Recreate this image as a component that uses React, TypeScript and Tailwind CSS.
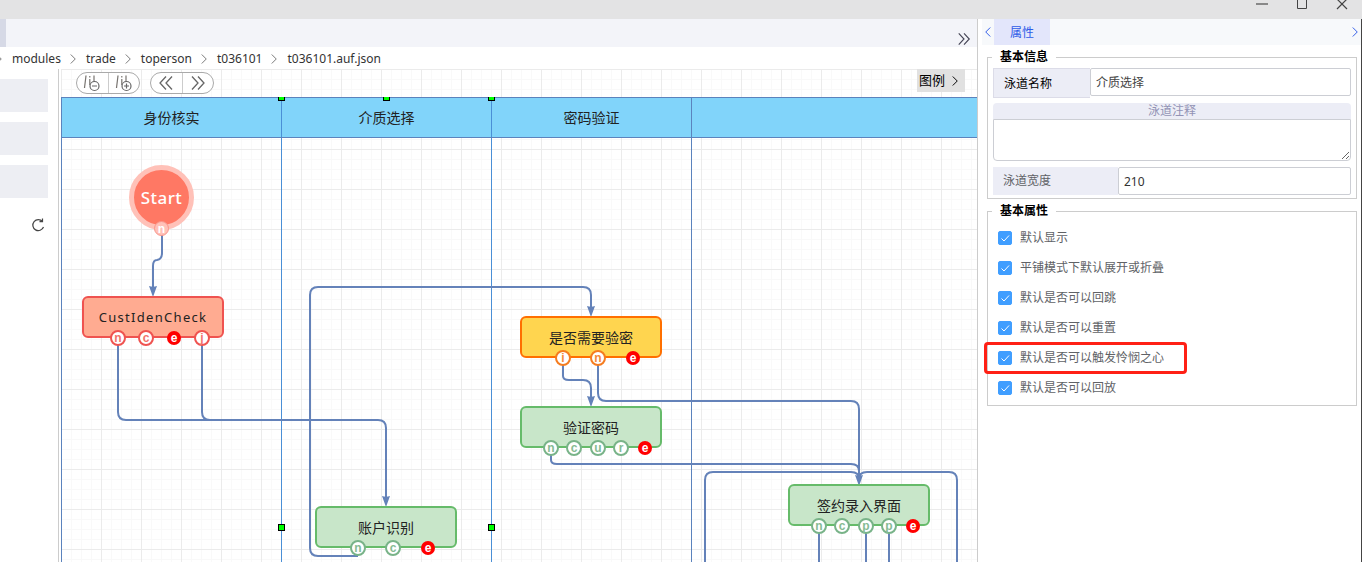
import React, { useState } from "react";

type Tone = "red" | "amber" | "green";
type Port = { x: number; label: string };
type FlowNode = { x: number; y: number; title: string; tone: Tone; ports: Port[] };

const box: Record<Tone, string> = {
  red: "border-[#ef5350] bg-[#ffab91]",
  amber: "border-[#ff6f00] bg-[#ffd54f]",
  green: "border-[#66bb6a] bg-[#c8e6c9]",
};
const portTone: Record<Tone, string> = {
  red: "border-[#ef5350] text-[#f2746c]",
  amber: "border-[#f57c1f] text-[#f5893a]",
  green: "border-[#78b388] text-[#86bb94]",
};

const nodes: FlowNode[] = [
  { x: 21, y: 227, title: "CustIdenCheck", tone: "red", ports: [{ x: 36, label: "n" }, { x: 64, label: "c" }, { x: 92, label: "e" }, { x: 120, label: "j" }] },
  { x: 459, y: 247, title: "是否需要验密", tone: "amber", ports: [{ x: 43, label: "i" }, { x: 78, label: "n" }, { x: 113, label: "e" }] },
  { x: 459, y: 337, title: "验证密码", tone: "green", ports: [{ x: 31, label: "n" }, { x: 54, label: "c" }, { x: 78, label: "u" }, { x: 101, label: "r" }, { x: 125, label: "e" }] },
  { x: 254, y: 437, title: "账户识别", tone: "green", ports: [{ x: 43, label: "n" }, { x: 78, label: "c" }, { x: 113, label: "e" }] },
  { x: 727, y: 415, title: "签约录入界面", tone: "green", ports: [{ x: 31, label: "n" }, { x: 54, label: "c" }, { x: 78, label: "p" }, { x: 101, label: "p" }, { x: 125, label: "e" }] },
];

const edges = [
  "M101 164V184Q101 190 96 191Q92 191 92 197V222",
  "M57 276V343Q57 351 65 351H317Q325 351 325 359V432",
  "M141 276V343Q141 351 149 351",
  "M297 487H257Q249 487 249 479V226Q249 218 257 218H522Q530 218 530 226V242",
  "M502 295V307Q502 311 508 311H522Q530 311 530 319V332",
  "M537 295V324Q537 332 545 332H790Q798 332 798 340V411",
  "M490 386V391Q490 395 496 395H790Q798 395 798 402",
  "M644 520V411Q644 403 652 403H790Q798 403 798 410Q798 403 806 403H888Q896 403 896 411V520",
  "M758 463V520",
  "M805 463V520",
  "M828 463V520",
];
const arrows = [[92, 227], [325, 437], [530, 247], [530, 337], [798, 416]];
const handles = [[220, 458], [430, 458]];

const crumbs = ["modules", "trade", "toperson", "t036101", "t036101.auf.json"];
const options = ["默认显示", "平铺模式下默认展开或折叠", "默认是否可以回跳", "默认是否可以重置", "默认是否可以触发怜悯之心", "默认是否可以回放"];

function Chevron({ left = false, double = false, className = "" }: { left?: boolean; double?: boolean; className?: string }) {
  return (
    <svg viewBox="0 0 16 16" fill="none" stroke="currentColor" strokeWidth="1.3" className={className} aria-hidden="true">
      <g transform={left ? "matrix(-1 0 0 1 16 0)" : undefined}>
        {double ? <path d="M2 1.5L8 8l-6 6.5M8 1.5L14 8l-6 6.5" /> : <path d="M5 2l6 6-6 6" />}
      </g>
    </svg>
  );
}

function LaneIcon({ plus = false }: { plus?: boolean }) {
  return (
    <svg viewBox="0 0 18 18" fill="none" className="size-[18px]" aria-hidden="true">
      <path d="M3 1.5L1.5 14" stroke="#77736f" strokeWidth="1.2" />
      <path d="M6.8 2v1.5M6.8 5v6M11 1.5v6" stroke="#77736f" strokeWidth="1.2" />
      <circle cx="11.5" cy="12" r="4.5" fill="#fff" stroke="#666" strokeWidth="1.2" />
      <path d={plus ? "M9 12h5M11.5 9.5v5" : "M9 12h5"} stroke="#666" strokeWidth="1.2" />
    </svg>
  );
}

function PortDot({ port, tone }: { port: Port; tone: Tone }) {
  const end = port.label === "e";
  return (
    <span
      style={{ left: port.x - 8, top: 34 }}
      className={`absolute flex size-4 items-center justify-center rounded-full font-['Liberation_Sans'] text-xs leading-none font-bold ${
        end ? "border border-transparent bg-[#ff0000] bg-clip-padding text-white" : `border-2 bg-white ${portTone[tone]}`
      }`}
    >
      {port.label}
    </span>
  );
}

function Canvas() {
  return (
    <main className="relative min-w-0 flex-1 overflow-hidden bg-white">
      <svg className="absolute inset-0 size-full" aria-hidden="true">
        <defs>
          <pattern id="grid" width="40" height="40" patternUnits="userSpaceOnUse">
            <path d="M10.5 0V40M20.5 0V40M30.5 0V40M0 10.5H40M0 20.5H40M0 30.5H40" stroke="#f9f9f9" />
            <path d="M.5 0V40M0 .5H40" stroke="#ebebeb" />
          </pattern>
        </defs>
        <rect width="100%" height="100%" fill="url(#grid)" />
      </svg>

      <div className="relative flex h-7 items-start pl-[15px] pr-3">
        <div className="mt-[3px] flex h-[22px] w-16 shrink-0 overflow-hidden rounded-full border border-[#aaa] bg-white">
          <button aria-label="缩小泳道" className="flex flex-1 items-center justify-center border-r border-[#ccc]"><LaneIcon /></button>
          <button aria-label="放大泳道" className="flex flex-1 items-center justify-center"><LaneIcon plus /></button>
        </div>
        <div className="ml-[10px] mt-[3px] flex h-[22px] w-16 shrink-0 overflow-hidden rounded-full border border-[#aaa] bg-white text-[#666]">
          <button aria-label="后退" className="flex flex-1 items-center justify-center border-r border-[#ccc]"><Chevron left double className="size-4" /></button>
          <button aria-label="前进" className="flex flex-1 items-center justify-center"><Chevron double className="size-4" /></button>
        </div>
        <button className="ml-auto flex h-[23px] w-12 items-center justify-between bg-[#e1e1e1] px-[2px] text-[13px] text-black">
          图例<Chevron className="mr-[2px] size-3" />
        </button>
      </div>

      <div className="relative flex h-[41px] border-y border-[#5b83bd] bg-[#81d4fa] text-sm text-[#222]">
        <div className="flex w-[221px] shrink-0 items-center justify-center border-x border-l-[#5b83bd] border-r-[#4a8fd6]">身份核实</div>
        <div className="flex w-[210px] shrink-0 items-center justify-center border-r border-[#4a8fd6]">介质选择</div>
        <div className="flex w-[200px] shrink-0 items-center justify-center border-r border-[#5b83bd]">密码验证</div>
        <span className="absolute -top-1 left-[217px] h-[7px] w-[7px] border border-black bg-[#00ff00] [clip-path:inset(3px_0_0_0)]" />
        <span className="absolute -top-1 left-[322px] h-[7px] w-[7px] border border-black bg-[#00ff00] [clip-path:inset(3px_0_0_0)]" />
        <span className="absolute -top-1 left-[427px] h-[7px] w-[7px] border border-black bg-[#00ff00] [clip-path:inset(3px_0_0_0)]" />
      </div>

      <svg className="pointer-events-none absolute inset-0 size-full" aria-hidden="true">
        <line x1=".5" x2=".5" y1="69" y2="100%" stroke="#5b83bd" />
        <line x1="220.5" x2="220.5" y1="69" y2="100%" stroke="#4a8fd6" />
        <line x1="430.5" x2="430.5" y1="69" y2="100%" stroke="#4a8fd6" />
        <line x1="630.5" x2="630.5" y1="69" y2="100%" stroke="#5b83bd" />
        {edges.map((d) => <path key={d} d={d} fill="none" stroke="#6482b9" strokeWidth="2" />)}
        {arrows.map(([x, y]) => (
          <path key={`${x}-${y}`} transform={`translate(${x} ${y})`} d="M0 1L-4 -10Q0 -8.5 4 -10Z" fill="#6482b9" />
        ))}
      </svg>

      <div className="absolute left-[68px] top-24 flex size-[65px] items-center justify-center rounded-full border-[5px] border-[#ffc1b8] bg-[#ff7864] text-[17px] font-medium tracking-wide text-white">
        Start
        <span className="absolute top-[51px] left-5 flex size-[15px] items-center justify-center rounded-full border border-[#f9958a] bg-[#ffc1b8] font-['Liberation_Sans'] text-xs font-bold leading-none tracking-normal">n</span>
      </div>

      {nodes.map((n) => (
        <div key={n.title} style={{ left: n.x, top: n.y }} className="absolute h-[42px] w-[142px]">
          <div className={`flex h-full items-center justify-center rounded-md border-2 pt-[2px] text-[#222] ${n.title === "CustIdenCheck" ? "text-[13px] tracking-widest" : "text-sm"} ${box[n.tone]}`}>{n.title}</div>
          {n.ports.map((p, i) => <PortDot key={i} port={p} tone={n.tone} />)}
        </div>
      ))}
      {handles.map(([x, y]) => (
        <span key={x} style={{ left: x - 3, top: y - 3 }} className="absolute size-[7px] border border-black bg-[#00ff00]" />
      ))}
    </main>
  );
}

function Properties() {
  const [name, setName] = useState("介质选择");
  const [note, setNote] = useState("");
  const [width, setWidth] = useState("210");
  const [checked, setChecked] = useState<boolean[]>(options.map(() => true));
  return (
    <aside className="flex w-[385px] shrink-0 flex-col border-l border-r border-l-[#ccc] border-r-[#444] bg-white text-xs text-[#606266]">
      <div className="ml-1 flex h-[26px] items-stretch bg-[#f7f9fb] text-[#2f5be8]">
        <button aria-label="上一个" className="flex w-3 items-center justify-center"><Chevron left className="size-3" /></button>
        <button className="w-14 bg-[#e3e6fb] pt-px">属性</button>
        <button aria-label="下一个" className="ml-auto flex w-3 items-center justify-center"><Chevron className="size-3" /></button>
      </div>

      <div className="flex flex-col gap-1 pl-[9px] pr-1 pt-1">
        <fieldset className="min-w-0 border border-[#ccc] px-[5px] pb-[3px]">
          <legend className="-ml-px px-2 text-xs leading-4 font-bold text-black">基本信息</legend>
          <div className="mt-[3px] flex h-[30px]">
            <label htmlFor="lane-name" className="flex w-[97px] shrink-0 items-center border border-r-0 border-[#dcdce8] bg-[#ecedf6] pt-px pl-[10px] text-black">泳道名称</label>
            <input id="lane-name" value={name} onChange={(e) => setName(e.target.value)} className="h-7 min-w-0 flex-1 rounded-xs border border-[#ccced4] px-[5px] text-[#444]" />
          </div>
          <div className="mt-[5px] flex flex-col">
            <label htmlFor="lane-note" className="flex h-4 items-center justify-center rounded-t bg-[#ecedf6] text-[#9293b5]">泳道注释</label>
            <textarea id="lane-note" value={note} onChange={(e) => setNote(e.target.value)} className="block h-[42px] w-full resize-y rounded-b border border-[#ccced4] p-1" />
          </div>
          <div className="mt-[6px] flex h-7">
            <label htmlFor="lane-width" className="flex w-[125px] shrink-0 items-center bg-[#ecedf6] pl-[10px]">泳道宽度</label>
            <input id="lane-width" value={width} onChange={(e) => setWidth(e.target.value)} className="min-w-0 flex-1 rounded-xs border border-[#ccced4] px-[5px] pt-px text-xs text-[#333]" />
          </div>
        </fieldset>

        <fieldset className="min-w-0 border border-[#ccc] pt-1 pb-[2px]">
          <legend className="ml-1 px-2 text-xs leading-4 font-bold text-black">基本属性</legend>
          {options.map((text, i) => (
            <div key={text} className="relative flex h-[30px] items-center pl-[10px]">
              <label className="flex items-center gap-2">
                <span className="relative flex size-[14px]">
                  <input
                    type="checkbox"
                    checked={checked[i]}
                    onChange={() => setChecked(checked.map((v, j) => (j === i ? !v : v)))}
                    className="peer size-[14px] appearance-none rounded-xs border border-[#409eff] checked:bg-[#409eff]"
                  />
                  <svg viewBox="0 0 14 14" fill="none" stroke="#fff" className="pointer-events-none absolute inset-0 hidden size-[14px] peer-checked:block" aria-hidden="true"><path d="M3.5 7.5L6 10l5-5.5" /></svg>
                </span>
                {text}
              </label>
              {i === 4 && <span className="pointer-events-none absolute -left-1 -top-px h-8 w-[203px] rounded-sm border-[3px] border-[#ff2015]" />}
            </div>
          ))}
        </fieldset>
      </div>
    </aside>
  );
}

export default function App() {
  return (
    <div className="flex h-screen flex-col overflow-hidden bg-white font-['Noto_Sans','Noto_Sans_CJK_SC',sans-serif]">
      <header className="flex h-[19px] shrink-0 justify-end bg-[#e3e3e4] text-[#444]">
        <button aria-label="最小化" className="flex w-10 justify-center text-[#888]"><svg width="12" height="12" viewBox="0 0 12 12" stroke="currentColor" strokeWidth="2" aria-hidden="true"><path d="M0 4h12" /></svg></button>
        <button aria-label="最大化" className="flex w-10 justify-center"><svg width="12" height="12" viewBox="0 0 12 12" fill="none" stroke="currentColor" aria-hidden="true"><path d="M1.5 0V8.5h9V0" /></svg></button>
        <button aria-label="关闭" className="flex w-10 justify-center"><svg width="12" height="12" viewBox="0 0 12 12" fill="none" stroke="currentColor" strokeWidth="1.2" aria-hidden="true"><path d="M1 -1l10 10M11 -1L1 9" /></svg></button>
      </header>
      <div className="flex min-h-0 flex-1">
        <div className="flex min-w-0 flex-1 flex-col">
          <div className="flex h-7 shrink-0 items-center justify-between bg-[#f3f4f9]">
            <span className="h-full w-[6px] bg-[#d6d9e6]" />
            <button aria-label="更多标签" className="mr-[6px] mt-3 text-[#445]"><Chevron double className="size-[14px]" /></button>
          </div>
          <nav aria-label="路径" className="-ml-[7px] flex h-[22px] shrink-0 items-center pt-[2px] text-xs text-[#333]">
            {crumbs.map((c) => (
              <React.Fragment key={c}>
                <Chevron className="mr-[7px] size-3 text-[#777] not-first:ml-[6px]" />
                <a href="#">{c}</a>
              </React.Fragment>
            ))}
          </nav>
          <div className="flex min-h-0 flex-1">
            <div className="flex w-[59px] shrink-0 flex-col gap-[10px] border-r border-[#ccc] pr-[10px] pt-[10px]">
              <div className="h-[33px] bg-[#edeef3]" />
              <div className="h-[33px] bg-[#edeef3]" />
              <div className="h-[33px] bg-[#edeef3]" />
              <button aria-label="刷新" className="mt-[10px] mr-[3px] self-end text-[#444]">
                <svg width="14" height="14" viewBox="0 0 14 14" fill="none" stroke="currentColor" strokeWidth="1.2" aria-hidden="true"><path d="M11.5 3.5A5.5 5.5 0 1 0 12.5 9M11.5 .5v3.2H8.5" /></svg>
              </button>
            </div>
            <div className="w-[2px] shrink-0" />
            <Canvas />
          </div>
        </div>
        <Properties />
      </div>
    </div>
  );
}
